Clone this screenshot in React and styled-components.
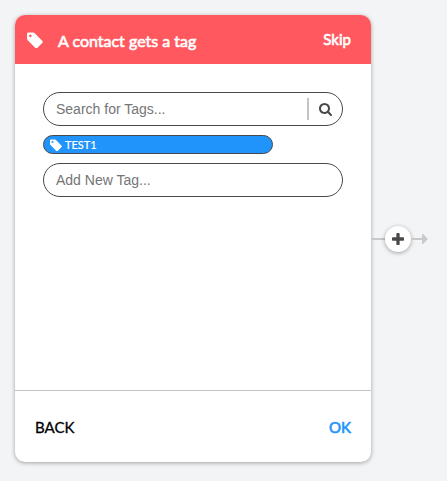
import React from "react";
import styled, { createGlobalStyle } from "styled-components";

const GlobalStyle = createGlobalStyle`
  *, *::before, *::after { box-sizing: border-box; }
  body { margin: 0; background: #f3f4f6; font-family: "Lato", sans-serif; }
  button, input { font: inherit; }
  button { margin: 0; padding: 0; border: 0; background: none; cursor: pointer; }
`;

const Page = styled.main`
  display: flex;
  align-items: center;
  padding: 15px 19px 19px 15px;
`;

const Card = styled.section`
  flex: 1;
  min-width: 0;
  overflow: hidden;
  border-radius: 10px;
  background: #fff;
  box-shadow: 0 1px 4px rgba(0, 0, 0, 0.35);
`;

const Header = styled.header`
  display: flex;
  align-items: center;
  padding: 12px 20px 12px 12px;
  background: #ff595f;
  color: #fff;
`;

const Title = styled.h1`
  flex: 1;
  margin: 0 0 0 15px;
  padding-top: 3px;
  font-size: 16px;
  line-height: 22px;
  font-weight: 400;
  -webkit-text-stroke: 0.6px currentColor;
`;

const SkipButton = styled.button`
  align-self: flex-start;
  color: #fff;
  font-size: 15px;
  line-height: 24px;
  -webkit-text-stroke: 0.6px currentColor;
`;

const Body = styled.div`
  display: flex;
  flex-direction: column;
  gap: 9px;
  min-height: 326px;
  padding: 28px;
`;

const Field = styled.div`
  display: flex;
  align-items: center;
  height: 34px;
  border: 1px solid #48494b;
  border-radius: 17px;
`;

const TextInput = styled.input`
  flex: 1;
  min-width: 0;
  height: 32px;
  padding: 0 12px;
  border: 0;
  outline: 0;
  background: none;
  color: #444;
  font-family: "Liberation Sans", Arial, sans-serif;
  font-size: 14px;
  &::placeholder { color: #757575; opacity: 1; }
`;

const SearchButton = styled.button`
  display: flex;
  align-items: center;
  justify-content: center;
  width: 35px;
  height: 22px;
  border-left: 2px solid #c4c4c4;
  color: #48494b;
`;

const TagChip = styled.button`
  display: flex;
  align-items: center;
  gap: 3px;
  width: 230px;
  max-width: 100%;
  height: 19px;
  padding: 0 6px;
  border: 1px solid #48494b;
  border-radius: 10px;
  background: #2094fa;
  color: #fff;
  font-size: 11px;
  line-height: 17px;
  -webkit-text-stroke: 0.2px currentColor;
`;

const Footer = styled.footer`
  display: flex;
  justify-content: space-between;
  padding: 24px 20px 23px;
  border-top: 1px solid #c4c4c4;
`;

const FooterButton = styled.button`
  color: ${(p) => (p.$primary ? "#2094fa" : "#000")};
  font-size: 15px;
  line-height: 24px;
  -webkit-text-stroke: ${(p) => (p.$primary ? "0.6px" : "0.3px")} currentColor;
`;

const Connector = styled.div`
  display: flex;
  align-items: center;
  color: #c8c9cb;
`;

const Line = styled.span`
  width: ${(p) => p.$width}px;
  height: 2px;
  background: currentColor;
`;

const AddButton = styled.button`
  display: flex;
  align-items: center;
  justify-content: center;
  width: 26px;
  height: 26px;
  border-radius: 50%;
  background: #fff;
  color: #48494b;
  box-shadow: 0 1px 4px rgba(0, 0, 0, 0.35);
`;

const Icon = styled.svg`
  flex: none;
  display: block;
  width: ${(p) => p.$size}px;
  height: ${(p) => p.$size}px;
  fill: currentColor;
`;

const TagIcon = ({ size }) => (
  <Icon $size={size} viewBox="0 80 1536 1536" aria-hidden="true">
    <path d="M448 448q0-53-37.500-90.500t-90.500-37.500-90.500 37.500-37.500 90.500 37.500 90.500 90.500 37.500 90.500-37.500 37.500-90.500zm1067 576q0 53-37 90l-491 492q-39 37-91 37-53 0-90-37l-715-716q-38-37-64.500-101t-26.500-117v-416q0-52 38-90t90-38h416q53 0 117 26.500t102 64.500l715 714q37 39 37 91z" />
  </Icon>
);

const SearchIcon = () => (
  <Icon $size={13} viewBox="64 128 1664 1664" aria-hidden="true">
    <path d="M1216 832q0-185-131.500-316.500t-316.500-131.500-316.500 131.500-131.500 316.500 131.500 316.500 316.500 131.500 316.500-131.500 131.500-316.500zm512 832q0 52-38 90t-90 38q-54 0-90-38l-343-342q-179 124-399 124-143 0-273.500-55.500t-225-150-150-225-55.500-273.500 55.500-273.500 150-225 225-150 273.500-55.500 273.500 55.500 225 150 150 225 55.500 273.500q0 220-124 399l343 343q37 37 37 90z" />
  </Icon>
);

const PlusIcon = () => (
  <Icon $size={12} viewBox="192 128 1408 1408" aria-hidden="true">
    <path d="M1600 736v192q0 40-28 68t-68 28h-416v416q0 40-28 68t-68 28h-192q-40 0-68-28t-28-68v-416h-416q-40 0-68-28t-28-68v-192q0-40 28-68t68-28h416v-416q0-40 28-68t68-28h192q40 0 68 28t28 68v416h416q40 0 68 28t28 68z" />
  </Icon>
);

const ArrowHead = styled.svg`
  display: block;
  width: 7px;
  height: 10px;
  fill: currentColor;
`;

export default function App() {
  return (
    <>
      <GlobalStyle />
      <Page>
        <Card>
          <Header>
            <TagIcon size={16} />
            <Title>A contact gets a tag</Title>
            <SkipButton type="button">Skip</SkipButton>
          </Header>
          <Body>
            <Field>
              <TextInput aria-label="Search for Tags" placeholder="Search for Tags..." />
              <SearchButton type="button" aria-label="Search">
                <SearchIcon />
              </SearchButton>
            </Field>
            <TagChip type="button">
              <TagIcon size={12} />
              TEST1
            </TagChip>
            <Field>
              <TextInput aria-label="Add New Tag" placeholder="Add New Tag..." />
            </Field>
          </Body>
          <Footer>
            <FooterButton type="button">BACK</FooterButton>
            <FooterButton type="button" $primary>OK</FooterButton>
          </Footer>
        </Card>
        <Connector>
          <Line $width={14} />
          <AddButton type="button" aria-label="Add step">
            <PlusIcon />
          </AddButton>
          <Line $width={10} />
          <ArrowHead viewBox="0 0 7 10" aria-hidden="true">
            <path d="M1 0h1l5 5-5 5H1V6H0V4h1z" />
          </ArrowHead>
        </Connector>
      </Page>
    </>
  );
}
